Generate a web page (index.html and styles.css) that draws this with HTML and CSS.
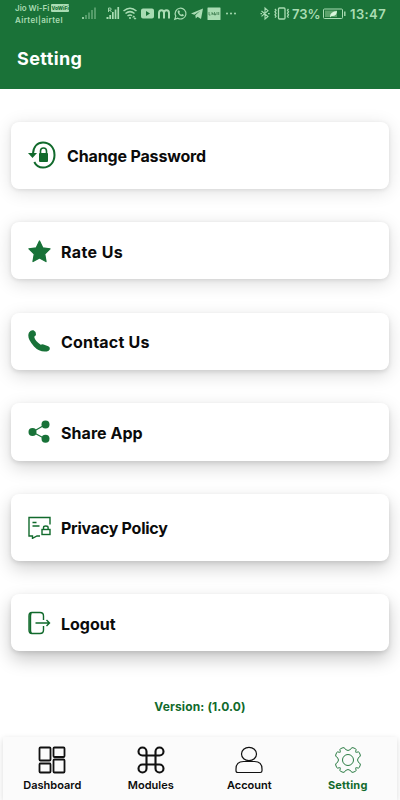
FILE: index.html
```
<!DOCTYPE html>
<html lang="en">
<head>
<meta charset="utf-8">
<title>Setting</title>
<link rel="stylesheet" href="styles.css">
</head>
<body>
<div class="app">
  <header class="header">
    <div class="status">
      <div class="carrier">
        <div class="carrier-line"><span class="t-jio">Jio Wi-Fi</span><span class="vowifi">VoWiFi</span></div>
        <div class="t-airtel">Airtel|airtel</div>
      </div>
      <svg class="status-icons" width="160" height="18" viewBox="80 5 160 18" fill="#a9dcb3">
        <g opacity=".4"><path d="M82 17h2v2h-2zM85 15h2v4h-2zM88 12.500h2v6.500h-2zM91 10h2v9h-2zM94 7.500h2v11.500h-2z"/></g>
        <path d="M82 17h2v2h-2z" opacity=".7"/>
        <path d="M106.500 17h2v2h-2zM109.300 15h1.800v4h-1.800zM112 12h1.700v7h-1.700zM114.700 9.500h1.700v9.500h-1.700zM117.400 7h1.700v12h-1.700z"/>
        <path d="M108.500 12V8h1.500q1.200 0 1.200 1.100t-1.200 1.100h-1.500m1.500 0 1.400 1.800" fill="none" stroke="#a9dcb3" stroke-width=".9"/>
        <g fill="none" stroke="#a9dcb3" stroke-width="1.500"><path d="M123.500 11q6.500-5.500 13 0M125.500 13.500q4.500-3.800 9 0M127.500 16q2.500-2 4.500-.3"/></g>
        <circle cx="130" cy="18" r="1"/><path d="m132 17.500 1.800-2 1.800 2zM133.500 18h3l-1.500 1.700z"/>
        <path fill-rule="evenodd" d="M143 8.500h9q2 0 2 2v6q0 2-2 2h-9q-2 0-2-2v-6q0-2 2-2zm3 2.500v5l4-2.500z"/>
        <path d="M159 18.500v-5.500q0-2.800 2.500-2.800t2.500 2.800v5.500m0-5.500q0-2.800 2.500-2.800t2.500 2.800v5.500" fill="none" stroke="#a9dcb3" stroke-width="2"/>
        <path d="m174.800 19.300 1-3.200a5.400 5.400 0 1 1 2 2.100z" fill="none" stroke="#a9dcb3" stroke-width="1.200"/>
        <path d="M178 10.500q-1 1.200.3 3.200t3.300 2.500 2.400-1.300l-1.700-1-1 .9q-1.500-.5-2-2l.7-.9-.7-1.500z"/>
        <path d="M191 13.500 203 8.500 201 19l-3.500-2.300-1.700 1.800-.5-3.200 5-4.500-6 4z"/>
        <rect x="207.500" y="7.500" width="13" height="12.500" rx=".5"/>
        <path d="M209 12v3h1.500M212 12v3m0-1.500h1.200V15M214.500 12v3h1v-1.500M217 12v3m1.700-3v3" fill="none" stroke="#3f7e50" stroke-width=".8"/>
        <circle cx="227" cy="13.500" r="1"/><circle cx="231" cy="13.500" r="1"/><circle cx="235" cy="13.500" r="1"/>
      </svg>
      <svg class="status-right" width="31" height="18" viewBox="260 5 31 18" fill="none" stroke="#a9dcb3">
        <path d="m261.500 11 6.500 5.500-3 2.500V8l3 2.700-6.500 5.600M260.500 13.600h1.500m6 0h1.700" stroke-width="1.100"/>
        <rect x="278.500" y="8" width="6.500" height="11" rx="1" stroke-width="1.300"/>
        <path d="m275 9 1 1.300-1 1.500 1 1.500-1 1.500 1 1.500-1 1.300m13.500-8.600-1 1.300 1 1.500-1 1.500 1 1.500-1 1.500 1 1.300" stroke-width="1.300"/>
      </svg>
      <span class="t-pct">73%</span>
      <svg class="battery" width="24" height="18" viewBox="322 5 24 18" fill="none" stroke="#a9dcb3">
        <rect x="323.500" y="9" width="19" height="9.500" rx="1"/><path d="M325 10.500h12v6.500h-12z" fill="#5ba36b" stroke="none"/><path d="M344.800 11.500v4.500" stroke-width="1.400"/>
        <path d="M330 16.500q.2-5 7-5.500-.2 5.500-5.500 5l-1.500 1.500z" fill="#d9f6dc" stroke="none"/>
      </svg>
      <span class="t-time">13:47</span>
    </div>
    <h1 class="t-title">Setting</h1>
  </header>

  <main class="list">
    <a class="card tall s1">
      <svg width="29" height="30" viewBox="0 0 29 30"><g fill="none" stroke="#116a2c" stroke-width="2"><path d="M5 13.500C5.500 6.500 9.500 2.500 15 2.500c6.500 0 11.500 5 11.500 12.500S21.500 27.500 15 27.500c-4 0-7-2-8.700-5.500"/><path d="M12.500 14v-3q0-3 3-3t3 3v3" stroke-width="1.600"/></g><path d="M0 13h9l-4.500 5z" fill="#116a2c"/><rect x="11" y="13" width="9" height="9" rx="1" fill="#116a2c"/></svg>
      <span class="t-change">Change Password</span></a>
    <a class="card s2">
      <svg width="23" height="24" viewBox="0 0 23 24"><path d="m11.500 2 3.200 6.800 7.300 1-5.300 5.300 1.300 7.400-6.500-3.500L5 22.500l1.300-7.400L1 9.800l7.300-1z" fill="#187238" stroke="#187238" stroke-width="1.300" stroke-linejoin="round"/></svg>
      <span class="t-rate">Rate Us</span></a>
    <a class="card s3">
      <svg width="23" height="24" viewBox="0 0 23 24"><path d="M1 3.500Q3 .5 5.500 1.300q2.800 1.500 2.500 4.200-.2 1.500-1.800 2.200.8 4.300 6.500 8 1.500-.7 2.800-.2l4.800 1.700q2 .8 1.500 3-.8 2-3 2.200-7.300 1-12.800-5Q.2 11 .3 6.500.3 4.800 1 3.500z" fill="#187238"/></svg>
      <span class="t-contact">Contact Us</span></a>
    <a class="card s4">
      <svg width="23" height="24" viewBox="0 0 23 24"><path d="M17.500 4.500 4.500 12l13 7" fill="none" stroke="#187238" stroke-width="1.200"/><g fill="#187238"><circle cx="17.500" cy="4.500" r="4"/><circle cx="4.500" cy="12" r="4"/><circle cx="17.500" cy="18.700" r="4"/></g></svg>
      <span class="t-share">Share App</span></a>
    <a class="card tall s5">
      <svg width="23" height="24" viewBox="0 0 23 24" fill="none" stroke="#116a2c" stroke-width="1.400"><path d="M22 9.500V2.500H1v18.500h3.500v2.300l4.500-2.300h3M4.500 7.500h4M4.500 11h7"/><rect x="14" y="14.500" width="8" height="5"/><path d="M15.500 14.500v-2q0-1.500 2.300-1.500t2.300 1.500v2"/></svg>
      <span class="t-privacy">Privacy Policy</span></a>
    <a class="card s6">
      <svg width="23" height="24" viewBox="0 0 23 24" fill="none" stroke="#116a2c" stroke-width="1.400"><path d="M15.500 9V5q0-3.500-3.500-3.500H4Q1 1.500 1 5v14q0 3.500 3 3.500h8q3.500 0 3.500-3.500v-4M3.500 1.500Q2.500 3 2.500 5v14q0 2 1 3.500"/><path d="M7.500 12H21.500m-3-3 3 3-3 3"/></svg>
      <span class="t-logout">Logout</span></a>
    <p class="version"><span class="t-version">Version: (1.0.0)</span></p>
  </main>

  <nav class="nav">
    <a class="tab"><svg width="28" height="28" viewBox="0 0 28 28" fill="none" stroke="#111" stroke-width="1.800"><rect x="1.500" y="1.500" width="11" height="13" rx="1"/><rect x="15.500" y="1.500" width="11" height="9.500" rx="1"/><rect x="1.500" y="17.500" width="11" height="9" rx="1"/><rect x="15.500" y="13.500" width="11" height="13" rx="1"/></svg><span class="t-dash">Dashboard</span></a>
    <a class="tab"><svg width="28" height="28" viewBox="0 0 28 28" fill="none" stroke="#111" stroke-width="2.100"><path d="M9.500 9.500V5.500A4 4 0 1 0 5.500 9.500h17a4 4 0 1 0-4-4v17a4 4 0 1 0 4-4h-17a4 4 0 1 0 4 4z"/></svg><span class="t-mod">Modules</span></a>
    <a class="tab"><svg width="28" height="28" viewBox="0 0 28 28" fill="none" stroke="#111" stroke-width="1.200"><ellipse cx="14" cy="8" rx="7.500" ry="6.700"/><path d="M8.500 15.500h11q7.500 0 7.500 7.500v1.800q0 1.700-1.700 1.700H2.700Q1 26.500 1 24.800V23q0-7.500 7.500-7.500z"/></svg><span class="t-acc">Account</span></a>
    <a class="tab active"><svg width="28" height="28" viewBox="0 0 28 28" fill="none" stroke="#2c7d45" stroke-width="1"><circle cx="14" cy="14" r="5.500"/><path d="M11.500 3.500Q10.500 1 9 1.700L6.500 2.700Q5.300 3.400 6.300 5.300 6.700 6.700 5.300 6.300 3.400 5.300 2.700 6.500L1.700 9Q1 10.500 3.500 11.500 5.500 14 3.500 16.500 1 17.500 1.700 19L2.700 21.500Q3.400 22.700 5.300 21.700 6.700 21.300 6.300 22.700 5.300 24.600 6.500 25.300L9 26.300Q10.500 27 11.500 24.500 14 22.500 16.500 24.500 17.500 27 19 26.300L21.500 25.300Q22.700 24.600 21.700 22.700 21.300 21.300 22.700 21.700 24.600 22.700 25.300 21.500L26.300 19Q27 17.500 24.500 16.500 22.500 14 24.500 11.500 27 10.500 26.300 9L25.300 6.500Q24.600 5.300 22.700 6.300 21.300 6.700 21.700 5.300 22.700 3.400 21.500 2.700L19 1.700Q17.500 1 16.500 3.500 14 5.500 11.500 3.500z"/></svg><span class="t-set">Setting</span></a>
  </nav>
</div>
</body>
</html>
```
FILE: styles.css
```
* { box-sizing: border-box; }
body { margin: 0; background: #fff; font-family: Inter, "Liberation Sans", sans-serif; color: #0b0b0b; }
svg { display: block; flex: none; }
span { white-space: nowrap; }
.app { width: 400px; height: 800px; display: flex; flex-direction: column; overflow: hidden; }
.header { height: 89px; background: #1a7238; flex: none; color: #fff; }
.status { height: 28px; display: flex; align-items: flex-start; padding-top: 5px; color: #a9dcb3; font-weight: 600; }
.carrier { width: 65px; padding: 0 0 0 15px; font-size: 8px; line-height: 12px; margin-top: -3px; }
.carrier-line { display: flex; align-items: center; height: 12px; gap: 2px; }
.carrier .t-airtel { white-space: nowrap; letter-spacing: .35px; }
.vowifi { background: #a9dcb3; color: #1a7238; font-size: 5px; line-height: 8px; height: 8px; width: 19px; text-align: center; border-radius: 1px; font-weight: 800; }
.status-icons { margin-left: 15px; }
.status-right { margin-left: 20px; }
.t-pct, .t-time { font-size: 13px; line-height: 18px; }
.t-pct { width: 30px; margin-left: 1px; }
.t-time { margin-left: 4px; letter-spacing: .4px; }
h1 { margin: 19px 0 0 17px; font-size: 18px; line-height: 24px; font-weight: 700; letter-spacing: .4px; }
.list { flex: 1; padding: 33px 11px 0; display: flex; flex-direction: column; gap: 33.300px; }
.card { height: 57.500px; flex: none; border-radius: 8px; background: #fff; display: flex; align-items: center; gap: 10px; padding-left: 17px; font-size: 16px; font-weight: 700; line-height: 24px; }
.card span { position: relative; top: 1px; }
.card.tall { height: 66.500px; }
.t-change { letter-spacing: -.15px; }
.t-rate { letter-spacing: .4px; }
.t-contact { letter-spacing: .2px; }
.t-share { letter-spacing: .05px; }
.t-privacy { letter-spacing: -.25px; }
.t-logout { letter-spacing: 0; }
.s1 { box-shadow: 0 1px 4px rgba(0,0,0,.09), 0 3px 18px rgba(0,0,0,.12); }
.s2 { box-shadow: 0 1px 4px rgba(0,0,0,.1), 0 4px 18px rgba(0,0,0,.14); }
.s3 { box-shadow: 0 2px 4px rgba(0,0,0,.1), 0 5px 18px rgba(0,0,0,.15); }
.s4 { box-shadow: 0 2px 4px rgba(0,0,0,.1), 0 6px 18px rgba(0,0,0,.17); }
.s5 { box-shadow: 0 2px 4px rgba(0,0,0,.1), 0 7px 18px rgba(0,0,0,.19); }
.s6 { box-shadow: 0 2px 4px rgba(0,0,0,.1), 0 8px 18px rgba(0,0,0,.22); }
.version { margin: 13px 0 0; text-align: center; font-size: 12px; line-height: 18px; font-weight: 700; color: #116a2c; letter-spacing: .13px; }
.nav { height: 63px; flex: none; margin: 0 3px; background: #fbfbfb; box-shadow: 0 2px 6px rgba(0,0,0,.15); display: flex; }
.tab { width: 98.500px; display: flex; flex-direction: column; align-items: center; padding-top: 9px; font-size: 11px; line-height: 16px; font-weight: 600; gap: 3px; }
.active { color: #116a2c; }
.t-set { font-weight: 700; letter-spacing: .2px; }
```
